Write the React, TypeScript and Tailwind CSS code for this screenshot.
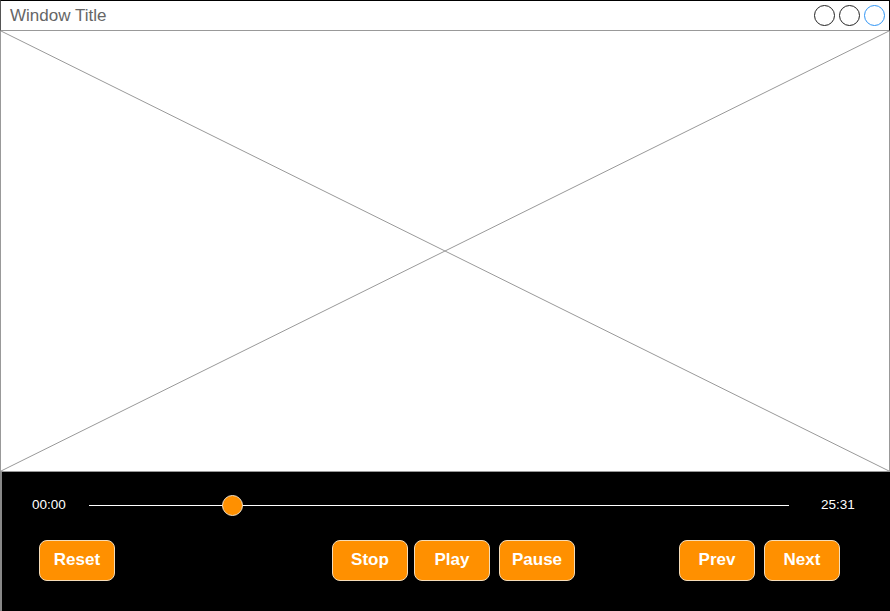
import React from "react";

const Btn = ({ label, className = "" }: { label: string; className?: string }) => (
  <button
    className={
      "h-[41px] w-[76px] rounded-[8px] border border-[#f5dcb8] bg-[#ff9000] pb-[2px] text-[17px] font-bold text-white leading-none " +
      className
    }
    style={{ fontFamily: '"Liberation Sans", Arial, sans-serif' }}
  >
    {label}
  </button>
);

export default function App() {
  return (
    <div
      className="flex h-[611px] w-[890px] flex-col overflow-hidden bg-white"
      style={{ fontFamily: '"Liberation Sans", Arial, sans-serif' }}
    >
      {/* title bar */}
      <div className="flex h-[31px] shrink-0 items-center justify-between border-t border-r border-l border-t-black border-r-black border-l-[#555] border-b border-b-[#999] pl-[9px] pr-[4px]">
        <span className="text-[17px] text-[#666]">Window Title</span>
        <div className="flex items-center gap-[4px]">
          <span className="h-[21px] w-[21px] rounded-full border border-[#222]" />
          <span className="h-[21px] w-[21px] rounded-full border border-[#222]" />
          <span className="h-[21px] w-[21px] rounded-full border border-[#2f95f5]" />
        </div>
      </div>

      {/* placeholder */}
      <div className="relative h-[440px] shrink-0 border-x border-[#999]">
        <svg className="h-full w-full" viewBox="0 0 888 440" preserveAspectRatio="none">
          <line x1="0" y1="0" x2="888" y2="440" stroke="#999" strokeWidth="1" />
          <line x1="888" y1="0" x2="0" y2="440" stroke="#999" strokeWidth="1" />
        </svg>
      </div>

      {/* controls */}
      <div className="flex flex-1 flex-col border-l-2 border-l-[#888] bg-black border-t border-t-[#999]">
        <div className="mt-[16px] flex h-[30px] items-center pt-[4px] text-[13.5px] text-white">
          <span className="ml-[30px] w-[36px]">00:00</span>
          <div className="relative ml-[21px] h-[1px] w-[700px] bg-white">
            <span className="absolute left-[133px] top-[-10px] h-[21px] w-[21px] rounded-full border border-[#f0e0c8] bg-[#ff9000]" />
          </div>
          <span className="ml-[32px]">25:31</span>
        </div>
        <div className="mt-[22px] flex items-center">
          <Btn label="Reset" className="ml-[37px]" />
          <Btn label="Stop" className="ml-[217px]" />
          <Btn label="Play" className="ml-[6px]" />
          <Btn label="Pause" className="ml-[9px]" />
          <Btn label="Prev" className="ml-[104px]" />
          <Btn label="Next" className="ml-[9px]" />
        </div>
      </div>
    </div>
  );
}
